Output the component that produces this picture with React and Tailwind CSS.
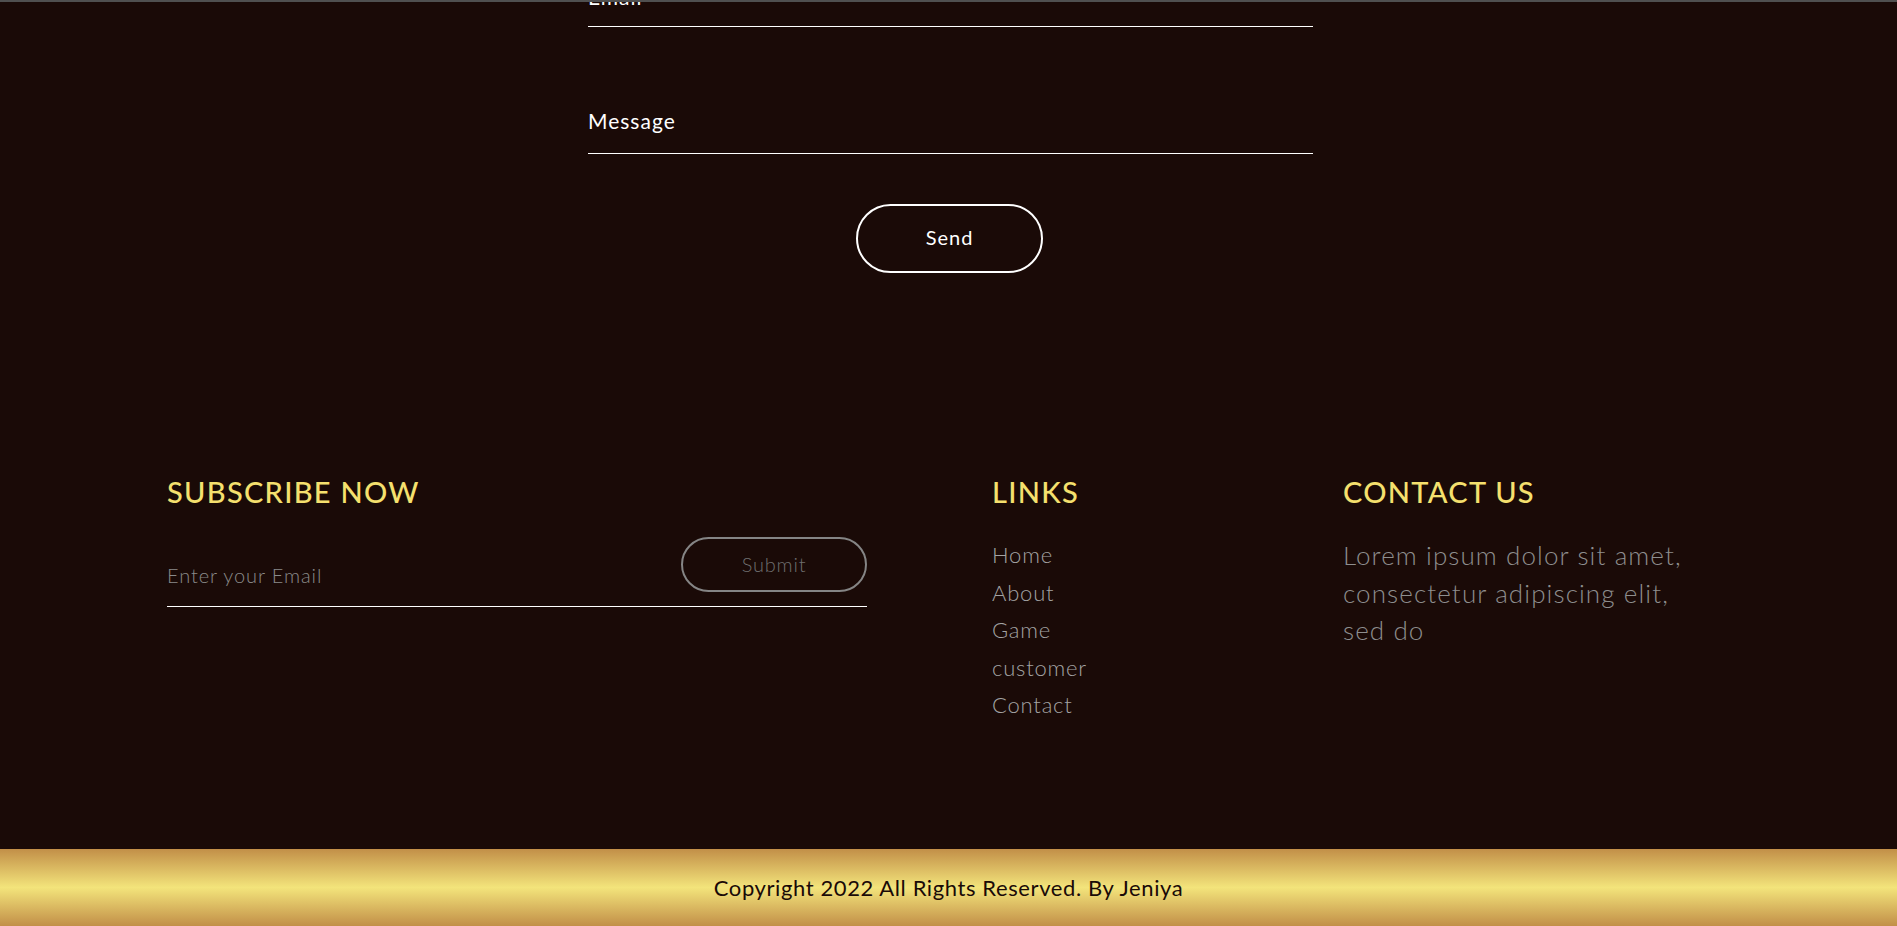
import React from 'react';

const links = ['Home', 'About', 'Game', 'customer', 'Contact'];

const App = () => {
  return (
    <div className="min-h-screen w-full flex flex-col bg-[#1a0a07] overflow-hidden font-['Lato','Open_Sans',sans-serif]">
      {/* top edge */}
      <div className="relative z-10 h-[2px] w-full bg-[#505050]" />

      {/* Contact form (scrolled) */}
      <section className="w-[725px] ml-[588px] flex flex-col">
        <div className="-mt-[18px] pb-[16px] border-b border-white">
          <label className="block text-[21px] leading-[26px] tracking-[1px] text-white">Email</label>
        </div>
        <div className="mt-[81px] pb-[19px] border-b border-white">
          <label className="block text-[21px] leading-[26px] tracking-[1px] text-white">Message</label>
        </div>
        <button className="mt-[50px] ml-[268px] w-[187px] h-[69px] pb-[3px] rounded-full border-2 border-white text-white text-[20px] tracking-[1px]">
          Send
        </button>
      </section>

      {/* Footer columns */}
      <section className="mt-[202px] flex pl-[167px]">
        {/* Subscribe */}
        <div className="w-[700px]">
          <h3 className="text-[29px] leading-[34px] font-medium tracking-[1.3px] text-[#f5e06e]">SUBSCRIBE NOW</h3>
          <div className="mt-[28px] flex items-end justify-between border-b border-white pb-[11px]">
            <input
              type="email"
              placeholder="Enter your Email"
              className="h-[40px] flex-1 bg-transparent outline-none text-[20px] tracking-[0.9px] font-light text-white placeholder:text-[#8a8a8a]"
            />
            <button className="mb-[3px] w-[186px] h-[55px] pb-[2px] rounded-full border-2 border-[#858585] text-[20px] tracking-[0.8px] font-light text-[#6e6e6e]">
              Submit
            </button>
          </div>
        </div>

        {/* Links */}
        <div className="ml-[125px] w-[351px]">
          <h3 className="text-[29px] leading-[34px] font-medium tracking-[1.3px] text-[#f5e06e]">LINKS</h3>
          <ul className="mt-[27px] flex flex-col">
            {links.map((l) => (
              <li key={l} className="text-[22px] leading-[37.5px] tracking-[0.8px] font-light text-[#a3a3a3]">
                <a href="#">{l}</a>
              </li>
            ))}
          </ul>
        </div>

        {/* Contact */}
        <div className="w-[400px]">
          <h3 className="text-[29px] leading-[34px] font-medium tracking-[1.3px] text-[#f5e06e]">CONTACT US</h3>
          <p className="mt-[28px] text-[26px] leading-[37.5px] tracking-[1.1px] font-light text-[#8e8e8e]">
            Lorem ipsum dolor sit amet,<br />
            consectetur adipiscing elit,<br />
            sed do
          </p>
        </div>
      </section>

      {/* Copyright bar */}
      <footer className="mt-auto h-[77px] flex items-center justify-center bg-[linear-gradient(180deg,#c28f48_0%,#f3e47b_50%,#c28f48_100%)]">
        <p className="text-[22px] tracking-[0.6px] text-[#1a0a07]">Copyright 2022 All Rights Reserved. By Jeniya</p>
      </footer>
    </div>
  );
};

export default App;
